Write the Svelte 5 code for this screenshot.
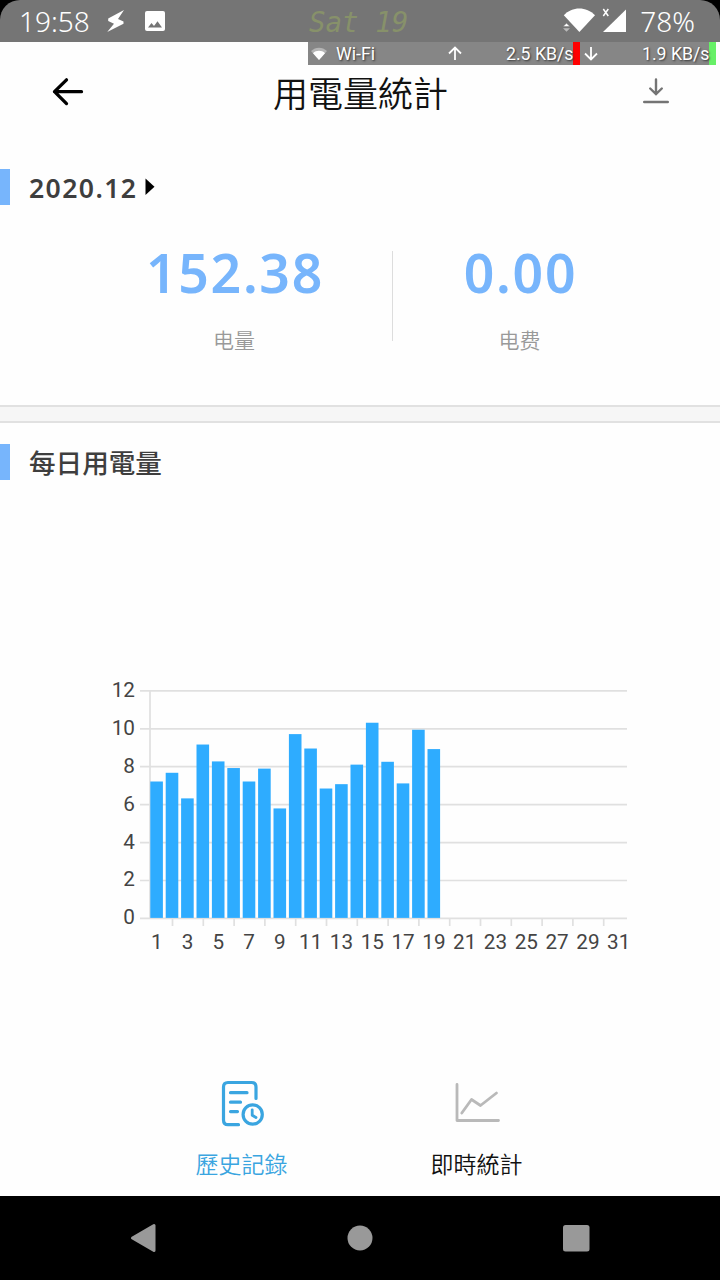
<script>
  // DAILY USAGE (kWh) //
  const days = [
    7.22, 7.68, 6.33, 9.17, 8.28, 7.93, 7.22, 7.9, 5.8, 9.72, 8.96, 6.85,
    7.08, 8.11, 10.32, 8.26, 7.12, 9.95, 8.93
  ];

  // CHART SCALE //
  const left = 49.5;
  const bottom = 248.4;
  const unit = 18.96;
  const slot = 15.4;

  const yTicks = [0, 2, 4, 6, 8, 10, 12];
  const xLabels = Array.from({ length: 16 }, (_, i) => i * 2 + 1);

  const yPos = v => bottom - v * unit;
  const xPos = day => left + 7.2 + (day - 1) * slot;

  const totals = [
    { value: "152.38", label: "电量" },
    { value: "0.00", label: "电费" }
  ];
</script>

<svelte:head>
  <title>用電量統計</title>
</svelte:head>

<div class="phone">
  <!-- STATUS BAR -->
  <div class="status-wrap">
    <div class="status">
      <span class="clock">19:58</span>
      <svg class="bolt" width="18" height="22" viewBox="0 0 18 22">
        <path d="M17 0 1.2 8.5V11L7 13.8.2 22 16.5 13.8V11.5L11 9z" fill="#fff" />
      </svg>
      <svg class="photo" width="20" height="20" viewBox="0 0 20 20">
        <rect width="20" height="20" rx="2" fill="#fff" />
        <path d="M3 16.5 6.5 12 9 15 12.5 10.2 17 16.5z" fill="#757575" />
      </svg>
      <span class="date">Sat 19</span>
      <svg class="signals" width="64" height="26" viewBox="0 0 64 26">
        <path d="M.8 7.2C9-1.8 23.5-1.8 32 7.2L16.4 24z" fill="#fff" />
        <path d="M0 18.6 3.5 15.2 7 18.6z" fill="#fff" stroke="#757575" stroke-width=".5" />
        <path d="M0 20.2h7L3.5 23.8z" fill="#b9b9b9" />
        <path d="M63 1.5V24H40z" fill="#fff" />
        <path d="M40.3 1 45.3 8M45.3 1 40.3 8" stroke="#fff" stroke-width="1.5" />
      </svg>
      <span class="battery">78%</span>
    </div>
  </div>

  <!-- NETWORK SPEED -->
  <div class="speed">
    <svg class="mini-wifi" width="16" height="13" viewBox="0 0 16 13">
      <path d="M0 4C4.500-.5 11.500-.5 16 4L8 13z" fill="#b4b4b4" />
      <path d="M2 6.200C5.300 3 10.700 3 14 6.200L8 13z" fill="#fff" />
    </svg>
    <span class="net">Wi-Fi</span>
    <svg class="up" width="14" height="15" viewBox="0 0 14 15">
      <path d="M7 14V1.500M1 7.500 7 1.500 13 7.500" />
    </svg>
    <span class="rate">2.5 KB/s</span>
    <i class="mark red"></i>
    <svg class="down" width="14" height="15" viewBox="0 0 14 15">
      <path d="M7 1V13.500M1 7.500 7 13.500 13 7.500" />
    </svg>
    <span class="rate second">1.9 KB/s</span>
    <i class="mark green"></i>
  </div>

  <!-- HEADER -->
  <header>
    <svg width="32" height="30" viewBox="0 0 32 30">
      <path d="M14.500 2.800 2.500 14.700 14.500 26.600M2.500 14.700H29.500" fill="none" stroke="#000" stroke-width="3.300" stroke-linecap="round" stroke-linejoin="round" />
    </svg>
    <h1>用電量統計</h1>
    <svg width="28" height="28" viewBox="0 0 28 28">
      <path d="M14 1.500V15.500M8.200 10.500 14 16 19.800 10.500M2.200 24H25.800" fill="none" stroke="#747474" stroke-width="2.400" stroke-linecap="round" />
    </svg>
  </header>

  <!-- MONTH SUMMARY -->
  <div class="section month">
    <span>2020.12</span>
    <svg width="10" height="18" viewBox="0 0 10 18"><path d="M.5.500 9.500 8.700.5 17z" /></svg>
  </div>
  <div class="totals">
    {#each totals as total}
      <div class="total">
        <strong>{total.value}</strong>
        <small>{total.label}</small>
      </div>
    {/each}
  </div>

  <div class="divider"></div>

  <!-- DAILY CHART -->
  <div class="section daily">每日用電量</div>
  <svg class="chart" width="560" height="300" viewBox="0 0 560 300">
    {#each yTicks as tick}
      <line x1="40" x2="527" y1={yPos(tick)} y2={yPos(tick)} />
      <text class="y" x="35" y={yPos(tick) + 6}>{tick}</text>
    {/each}
    <line x1="50" x2="50" y1="20" y2="248" />
    {#each days as kwh, i}
      <rect x={xPos(i + 1) - 6.4} y={yPos(kwh)} width="12.600" height={kwh * unit - 0.5} />
    {/each}
    {#each xLabels as day, i}
      {#if i < 15}
        <line x1={xPos(day) + slot + 0.4} x2={xPos(day) + slot + 0.4} y1="248" y2="256" />
      {/if}
      <text x={xPos(day)} y="279">{day}</text>
    {/each}
  </svg>

  <!-- TABS -->
  <nav class="tabs">
    <div class="tab active">
      <svg width="48" height="48" viewBox="0 0 48 48" fill="none" stroke="#3aa5e0" stroke-width="3.200" stroke-linecap="round" stroke-linejoin="round">
        <path d="M20.500 44.700H10Q5.500 44.700 5.500 40V7Q5.500 2.500 10 2.500H33.500Q38 2.500 38 7V18.500M12.500 12.700H29M12.500 22.200H22.500M12.500 31.600H19.500" />
        <circle cx="34.700" cy="34.500" r="9.600" />
        <path d="M34.200 29.800V35.200L38 37.500" stroke-width="2.800" />
      </svg>
      <span>歷史記錄</span>
    </div>
    <div class="tab">
      <svg width="48" height="48" viewBox="0 0 48 48" fill="none" stroke="#b9b9b9" stroke-width="2.800" stroke-linecap="round" stroke-linejoin="round">
        <path d="M4 4.500V40.500H45.500M8.800 33 18.500 19.500 27.500 25.500 43.500 13" />
      </svg>
      <span>即時統計</span>
    </div>
  </nav>

  <!-- ANDROID NAVIGATION -->
  <div class="android">
    <svg width="28" height="30" viewBox="0 0 28 30"><path d="M3.500 15 25 2.500V27.500z" stroke="#999" stroke-width="3" stroke-linejoin="round" /></svg>
    <svg width="26" height="26" viewBox="0 0 26 26"><circle cx="13" cy="13" r="12.500" /></svg>
    <svg width="28" height="28" viewBox="0 0 28 28"><rect x="1" y="1" width="26.500" height="26.500" rx="2.500" /></svg>
  </div>
</div>

<style>
  .phone {
    display: flex;
    flex-direction: column;
    width: 720px;
    height: 1280px;
    overflow: hidden;
    background: #fefefe;
    font-family: "Noto Sans", "Noto Sans CJK TC", sans-serif;
  }

  svg {
    display: block;
    flex: none;
  }

  .status-wrap {
    background: #000;
  }

  .status {
    display: flex;
    align-items: center;
    height: 42px;
    box-sizing: border-box;
    padding: 0 25px 0 19px;
    border-radius: 20px 20px 0 0;
    background: #757575;
    color: #fff;
    font-size: 28px;
    font-weight: 300;
    white-space: nowrap;
  }

  .clock {
    width: 88px;
    line-height: 42px;
  }

  .photo {
    margin-left: 20px;
  }

  .date {
    width: 254px;
    margin-left: 144px;
    padding-top: 1px;
    color: #87916a;
    font: italic 27.5px "DejaVu Sans Mono", monospace;
  }

  .battery {
    margin-left: auto;
    font-size: 28px;
  }

  .speed {
    display: flex;
    align-items: center;
    align-self: flex-end;
    width: 412px;
    height: 23px;
    box-sizing: border-box;
    padding-left: 3px;
    background: linear-gradient(90deg, #868686 408px, #fefefe 408px);
    color: #fff;
    font: 17.7px Roboto, sans-serif;
    text-shadow: 1px 1px 2px #333;
    white-space: nowrap;
  }

  .net {
    width: 112px;
    margin-left: 9px;
  }

  .speed .up,
  .speed .down {
    fill: none;
    stroke: #fff;
    stroke-width: 1.8;
  }

  .rate {
    z-index: 1;
    width: 67px;
    margin-left: 44px;
  }

  .second {
    margin-left: 44px;
  }

  .mark {
    width: 7px;
    height: 23px;
  }

  .red {
    margin-right: 4px;
    background: #f00;
  }

  .green {
    background: #67f067;
  }

  header {
    display: flex;
    align-items: center;
    justify-content: space-between;
    height: 53px;
    box-sizing: border-box;
    padding: 0 50px 0 52px;
  }

  h1 {
    margin: 0 5px 0 0;
    color: #111;
    font: 350 35px/53px "Noto Sans CJK TC", sans-serif;
  }

  .section {
    display: flex;
    align-items: center;
    height: 36px;
    box-sizing: border-box;
    padding-left: 19px;
    border-left: 10px solid #77b5fc;
    color: #3e3e3e;
    font-size: 26.6px;
    font-weight: 600;
    line-height: 36px;
  }

  .month {
    gap: 8px;
    margin-top: 51px;
    letter-spacing: 1.4px;
  }

  .month span {
    padding-top: 2px;
  }

  .totals {
    display: grid;
    grid-template-columns: 285px 254px;
    grid-template-rows: 90px;
    margin: 46px 0 0 107px;
  }

  .total {
    display: flex;
    flex-direction: column;
    align-items: center;
  }

  .total + .total {
    border-left: 1px solid #ddd;
  }

  .total:first-child {
    padding-right: 31px;
  }

  strong {
    color: #77b5fc;
    font-size: 53.5px;
    font-weight: 600;
    line-height: 44px;
    letter-spacing: 1.7px;
    margin-right: -2px;
  }

  small {
    margin-top: 29px;
    color: #999;
    font: 350 21px/30px "Noto Sans CJK SC", sans-serif;
  }

  .divider {
    height: 18px;
    box-sizing: border-box;
    margin-top: 64px;
    border: solid #e1e1e1;
    border-width: 2px 0;
    background: #f6f6f6;
  }

  .daily {
    margin-top: 21px;
    font-family: "Noto Sans CJK TC", sans-serif;
    font-weight: 500;
  }

  .chart {
    margin: 190px 0 0 100px;
  }

  .chart line {
    stroke: #e0e0e0;
    stroke-width: 1.7;
  }

  .chart rect {
    fill: #2eacff;
  }

  .chart text {
    fill: #444;
    font: 20.7px Roboto, sans-serif;
    text-anchor: middle;
  }

  .chart .y {
    text-anchor: end;
  }

  .tabs {
    display: flex;
    height: 116px;
    margin: 110px 0 0 124px;
  }

  .tab {
    display: flex;
    flex-direction: column;
    align-items: center;
    width: 235px;
    color: #111;
    font: 350 23px/34px "Noto Sans CJK TC", sans-serif;
  }

  .tab span {
    margin-top: 18px;
  }

  .active {
    color: #3aa5e0;
  }

  .android {
    display: flex;
    align-items: center;
    justify-content: space-between;
    height: 84px;
    box-sizing: border-box;
    padding: 0 130px 0 129px;
    background: #000;
    fill: #999;
  }
</style>
